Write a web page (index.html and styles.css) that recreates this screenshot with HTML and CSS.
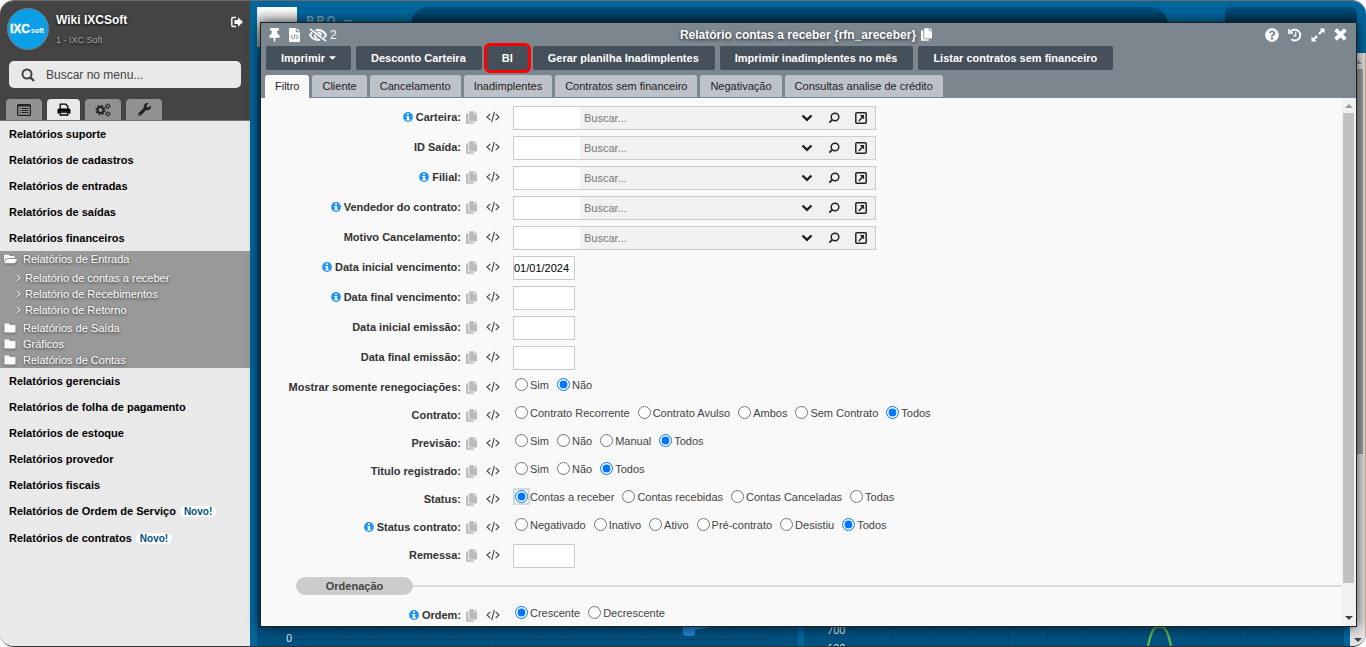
FILE: index.html
```html
<!DOCTYPE html>
<html lang="pt-BR">
<head>
<meta charset="utf-8">
<title>Relatório contas a receber</title>
<link rel="stylesheet" href="styles.css">
</head>
<body>
<svg class="sprite" aria-hidden="true">
  <symbol id="i-copy" viewBox="0 0 448 512"><path d="M320 448v40c0 13.255-10.745 24-24 24H24c-13.255 0-24-10.745-24-24V120c0-13.255 10.745-24 24-24h72v296c0 30.879 25.121 56 56 56h168zm0-344V0H152c-13.255 0-24 10.745-24 24v368c0 13.255 10.745 24 24 24h272c13.255 0 24-10.745 24-24V128H344c-13.2 0-24-10.8-24-24zm120.971-31.029L375.029 7.029A24 24 0 0 0 358.059 0H352v96h96v-6.059a24 24 0 0 0-7.029-16.97z"/></symbol>
  <symbol id="i-code" viewBox="0 0 14 12"><path d="M4.300 2.800L1 6l3.300 3.200M9.700 2.800L13 6l-3.300 3.200M8.300 .8L5.700 11.200" fill="none" stroke="currentColor" stroke-width="1.100"/></symbol>
  <symbol id="i-info" viewBox="0 0 10 10"><circle cx="5" cy="5" r="4.900"/><path d="M4 1.500h2v1.600H4zM3.300 4h2.800v3.200h.8v1.200H3.300V7.200h.8v-2h-.8z" fill="#fff"/></symbol>
  <symbol id="i-help" viewBox="0 0 512 512"><path d="M504 256c0 136.997-111.043 248-248 248S8 392.997 8 256C8 119.083 119.043 8 256 8s248 111.083 248 248zM262.655 90c-54.497 0-89.255 22.957-116.549 63.758-3.536 5.286-2.353 12.415 2.715 16.258l34.699 26.31c5.205 3.947 12.621 3.008 16.665-2.122 17.864-22.658 30.113-35.797 57.303-35.797 20.429 0 45.698 13.148 45.698 32.958 0 14.976-12.363 22.667-32.534 33.976C247.128 238.528 216 254.941 216 296v4c0 6.627 5.373 12 12 12h56c6.627 0 12-5.373 12-12v-1.333c0-28.462 83.186-29.647 83.186-106.667 0-58.002-60.165-102-116.531-102zM256 338c-25.365 0-46 20.635-46 46 0 25.364 20.635 46 46 46s46-20.636 46-46c0-25.365-20.635-46-46-46z"/></symbol>
  <symbol id="i-folder" viewBox="0 0 12 10"><path d="M1.500.5h3.300L6 2h4.500q1 0 1 1v5.500q0 1-1 1h-9q-1 0-1-1v-7q0-1 1-1z"/></symbol>
  <symbol id="i-folder-open" viewBox="0 0 576 512"><path d="M572.694 292.093L500.270 416.248A63.997 63.997 0 0 1 444.989 448H45.025c-18.523 0-30.064-20.093-20.731-36.093l72.424-124.155A64 64 0 0 1 152 256h399.964c18.523 0 30.064 20.093 20.730 36.093zM152 224h328v-48c0-26.510-21.490-48-48-48H272l-64-64H48C21.490 64 0 85.490 0 112v278.046l69.077-118.418C86.214 242.250 117.989 224 152 224z"/></symbol>
  <symbol id="i-chev" viewBox="0 0 12 8"><path d="M1.500 1.500L6 5.800l4.500-4.300" fill="none" stroke="currentColor" stroke-width="2.400"/></symbol>
  <symbol id="i-lens" viewBox="0 0 12 12"><circle cx="7" cy="5" r="3.800" fill="none" stroke="currentColor" stroke-width="1.500"/><path d="M4.300 7.700L1.300 10.700" stroke="currentColor" stroke-width="1.800"/></symbol>
  <symbol id="i-open" viewBox="0 0 12 12"><rect x=".8" y=".8" width="10.400" height="10.400" rx="1" fill="none" stroke="currentColor" stroke-width="1.500"/><path d="M4.600 3h4.500v4.500L7.700 6.100 4.300 9.400l-1-1L6.600 5z"/></symbol>
  <symbol id="i-up" viewBox="0 0 8 4"><path d="M0 4l4-4 4 4z"/></symbol>
  <symbol id="i-down" viewBox="0 0 8 4"><path d="M0 0l4 4 4-4z"/></symbol>
</svg>

<div class="app">
  <aside class="sidebar">
    <header class="side-head">
      <div class="profile">
        <svg class="logo" viewBox="0 0 42 42" role="img" aria-label="IXCsoft"><circle cx="21" cy="21" r="20.500" fill="#0a9fe6" stroke="#6d7f88"/><text x="3" y="25" class="logo-big">IXC</text><text x="24" y="25" class="logo-small">soft</text></svg>
        <div class="who"><strong>Wiki IXCSoft</strong><span>1 - IXC Soft</span></div>
        <button class="plain exit" aria-label="Sair"><svg viewBox="0 0 12 12" width="12" height="12"><path d="M5 1.500H2Q.8 1.500.8 2.700v6.600Q.8 10.500 2 10.500h3" fill="none" stroke="currentColor" stroke-width="1.400"/><path d="M3.500 4H7V1.300L12 6l-5 4.700V8H3.500z"/></svg></button>
      </div>
      <label class="search"><svg viewBox="0 0 14 14" width="14" height="14"><circle cx="6" cy="6" r="4.500" fill="none" stroke="currentColor" stroke-width="2"/><path d="M9.300 9.300l3.700 3.700" stroke="currentColor" stroke-width="2.400"/></svg><input type="text" placeholder="Buscar no menu..." aria-label="Buscar no menu"></label>
      <nav class="side-tabs">
        <button aria-label="Menu"><svg viewBox="0 0 14 12" width="14" height="12"><rect x=".6" y=".6" width="12.800" height="10.800" rx="1" fill="none" stroke="currentColor" stroke-width="1.200"/><path d="M1 1h12v1.500H1zM2.500 4h1v1h-1zM4.500 4h7v1h-7zM2.500 6h1v1h-1zM4.500 6h7v1h-7zM2.500 8h1v1h-1zM4.500 8h7v1h-7z"/></svg></button>
        <button class="on" aria-label="Relatórios"><svg viewBox="0 0 14 13" width="14" height="13"><path d="M3.200 6V1.200h5.600l2 2V6M3.200 9h7.600v3H3.200z" fill="none" stroke="currentColor" stroke-width="1.300"/><path d="M2 5.500h10q1.500 0 1.500 1.500v3.500H11.400V8.400H2.600v2.100H.5V7Q.5 5.500 2 5.500z"/></svg></button>
        <button aria-label="Configurações"><svg viewBox="0 0 16 14" width="16" height="14" fill="none" stroke="currentColor"><g class="hollow"><circle cx="5.500" cy="7" r="3" stroke-width="2"/><circle cx="5.500" cy="7" r="4.500" stroke-width="1.400" stroke-dasharray="1.770 1.765"/><circle cx="12.800" cy="3.200" r="1.500"/><circle cx="12.800" cy="3.200" r="2.400" stroke-dasharray="1 .885"/><circle cx="12.800" cy="10.800" r="1.500"/><circle cx="12.800" cy="10.800" r="2.400" stroke-dasharray="1 .885"/></g></svg></button>
        <button aria-label="Ferramentas"><svg viewBox="0 0 512 512" width="13" height="13"><path d="M507.730 109.100c-2.240-9.030-13.540-12.090-20.120-5.510l-74.360 74.360-67.880-11.310-11.310-67.880 74.360-74.360c6.620-6.620 3.430-17.900-5.660-20.160-47.380-11.740-99.550.91-136.580 37.930-39.640 39.640-50.550 97.100-34.050 147.200L18.740 402.760c-24.990 24.990-24.990 65.510 0 90.500 24.990 24.990 65.510 24.990 90.500 0l213.210-213.210c50.120 16.710 107.470 5.680 147.370-34.220 37.070-37.070 49.700-89.320 37.910-136.730zM64 472c-13.250 0-24-10.750-24-24 0-13.260 10.750-24 24-24s24 10.740 24 24c0 13.250-10.750 24-24 24z"/></svg></button>
      </nav>
    </header>
    <nav class="menu">
      <a href="#">Relatórios suporte</a>
      <a href="#">Relatórios de cadastros</a>
      <a href="#">Relatórios de entradas</a>
      <a href="#">Relatórios de saídas</a>
      <a href="#">Relatórios financeiros</a>
      <div class="tree">
        <a href="#"><svg class="ico-fopen"><use href="#i-folder-open"/></svg>Relatórios de Entrada</a>
        <div class="leaves">
          <a href="#"><svg viewBox="0 0 5 8"><path d="M.8.8L4 4 .8 7.200"/></svg>Relatório de contas a receber</a>
          <a href="#"><svg viewBox="0 0 5 8"><path d="M.8.8L4 4 .8 7.200"/></svg>Relatório de Recebimentos</a>
          <a href="#"><svg viewBox="0 0 5 8"><path d="M.8.8L4 4 .8 7.200"/></svg>Relatório de Retorno</a>
        </div>
        <a href="#"><svg class="ico-f"><use href="#i-folder"/></svg>Relatórios de Saída</a>
        <a href="#"><svg class="ico-f"><use href="#i-folder"/></svg>Gráficos</a>
        <a href="#"><svg class="ico-f"><use href="#i-folder"/></svg>Relatórios de Contas</a>
      </div>
      <a href="#">Relatórios gerenciais</a>
      <a href="#">Relatórios de folha de pagamento</a>
      <a href="#">Relatórios de estoque</a>
      <a href="#">Relatórios provedor</a>
      <a href="#">Relatórios fiscais</a>
      <a href="#" class="tagged">Relatórios de Ordem de Serviço <span class="new">Novo!</span></a>
      <a href="#" class="tagged">Relatórios de contratos <span class="new">Novo!</span></a>
    </nav>
  </aside>

  <main class="desk">
    <div class="desk-head">
      <div class="brand-box"></div><div class="brand">BRO —</div><div class="pill-wide"></div><div class="pill-end"></div>
    </div>
    <div class="desk-body">
      <div class="panels">
        <section class="panel">
          <svg width="541" height="19" viewBox="0 0 541 19">
            <path class="grid" d="M36 12.500h475M45.500 0v19M84.500 0v19M122.500 0v19M161.500 0v19M200.500 0v19M238.500 0v19M277.500 0v19M316.500 0v19M354.500 0v19M393.500 0v19M432.500 0v19M471.500 0v19M510.500 0v12"/>
            <path d="M426 0h28l-16 3v3q0 3-3 3h-6q-3 0-3-3z" fill="#1e86d8"/>
            <text x="29" y="15" class="tick">0</text>
          </svg>
        </section>
        <section class="panel">
          <svg width="540" height="19" viewBox="0 0 540 19">
            <path class="grid" d="M50.500 0v19M88.500 0v19M127.500 0v19M166.500 0v19M204.500 0v19M243.500 0v19M282.500 0v19M320.500 0v19M359.500 0v19M397.500 0v19M436.500 0v19M474.500 0v19M513.500 0v19"/>
            <path d="M344 19q4-19 9-19h5q5 0 9 19" fill="none" stroke="#5cae50" stroke-width="2.500"/>
            <text x="23" y="7" class="tick">700</text><text x="23" y="25" class="tick">600</text>
          </svg>
        </section>
      </div>
      <div class="page-scroll"><svg class="arrow dim"><use href="#i-up"/></svg><i></i><svg class="arrow"><use href="#i-down"/></svg></div>
    </div>

    <section class="dialog" role="dialog" aria-label="Relatório contas a receber">
      <header class="dlg-head">
        <div class="titlebar">
          <div class="tools">
            <button class="plain" aria-label="Fixar"><svg viewBox="0 0 384 512" width="11" height="14"><path d="M298.028 214.267L285.793 96H328c13.255 0 24-10.745 24-24V24c0-13.255-10.745-24-24-24H56C42.745 0 32 10.745 32 24v48c0 13.255 10.745 24 24 24h42.207L85.972 214.267C37.465 236.820 0 277.261 0 328c0 13.255 10.745 24 24 24h136v104.007c0 1.242.289 2.467.845 3.578l24 48c2.941 5.882 11.364 5.893 14.311 0l24-48a8.008 8.008 0 0 0 .845-3.578V352h136c13.255 0 24-10.745 24-24-.001-51.183-37.983-91.420-85.973-113.733z"/></svg></button>
            <button class="plain" aria-label="Código"><svg viewBox="0 0 11 14" width="11" height="14"><path d="M1 0h5.800v3.500q0 .7.700.7H11V13q0 1-1 1H1q-1 0-1-1V1q0-1 1-1zM7.700 0L11 3.300H7.700z"/><path d="M3.700 7L1.900 8.900l1.800 1.900M7.300 7l1.800 1.900-1.800 1.900M6.200 6.300l-1.400 5.200" fill="none" stroke="#7b868f"/></svg></button>
            <button class="plain" aria-label="Campos ocultos"><svg class="hollow" viewBox="0 0 18 14" width="18" height="14" stroke="currentColor"><path d="M3.200 4.500Q1.800 5.700 1 7q3 5 8 5 1 0 2-.3M6.300 2.400Q7.600 2 9 2q5 0 8 5-.8 1.500-2.200 2.700" stroke-width="1.800"/><path d="M5.700 6.600Q5.600 9.600 8.500 10.300M8.500 4.500q3.200-.3 3.600 2.900" stroke-width="1.900"/><path d="M1 .8l16 12.400" stroke-width="1.700"/></svg></button>
            <span>2</span>
          </div>
          <h1>Relatório contas a receber {rfn_areceber}<svg><use href="#i-copy"/></svg></h1>
          <div class="win">
            <button class="plain" aria-label="Ajuda"><svg width="14" height="14"><use href="#i-help"/></svg></button>
            <button class="plain" aria-label="Histórico"><svg class="hollow" viewBox="0 0 14 14" width="14" height="14" stroke="currentColor"><path d="M2.500 4A5.400 5.400 0 1 1 3.300 11.200" stroke-width="1.900"/><path d="M7.600 4.300v3.500H5.200" stroke-width="1.300"/><path d="M1 1v4h4" stroke-width="1.700"/></svg></button>
            <button class="plain" aria-label="Maximizar"><svg viewBox="0 0 14 14" width="14" height="14"><path d="M8.500.5h5v5l-1.700-1.700-3 3-1.600-1.600 3-3zM.5 8.500l1.700 1.700 3-3 1.600 1.600-3 3 1.700 1.700h-5z"/></svg></button>
            <button class="plain" aria-label="Fechar"><svg viewBox="0 0 12 12" width="13" height="13"><path d="M1.500 1.500l9 9M10.500 1.500l-9 9" stroke="currentColor" stroke-width="3.600"/></svg></button>
          </div>
        </div>
        <div class="actions">
          <button class="drop">Imprimir <svg><use href="#i-down"/></svg></button>
          <button>Desconto Carteira</button>
          <button class="marked">BI</button>
          <button>Gerar planilha Inadimplentes</button>
          <button>Imprimir inadimplentes no mês</button>
          <button>Listar contratos sem financeiro</button>
        </div>
        <nav class="tabs">
          <button class="on">Filtro</button><button>Cliente</button><button>Cancelamento</button><button>Inadimplentes</button><button>Contratos sem financeiro</button><button>Negativação</button><button>Consultas analise de crédito</button>
        </nav>
      </header>
      <div class="dlg-body">
        <form class="form" id="form"></form>
        <div class="scroll"><svg class="arrow dim"><use href="#i-up"/></svg><i></i><svg class="arrow"><use href="#i-down"/></svg></div>
      </div>
    </section>
  </main>
</div>
<script src="form.js"></script>
</body>
</html>
```
FILE: styles.css
```css
* { box-sizing: border-box; }
body { margin: 0; background: #fff; font: 11px/16px "Liberation Sans", Arial, sans-serif; color: #444; }
button, input { font: inherit; color: inherit; }
button { border: 0; padding: 0; cursor: pointer; }
a { color: inherit; text-decoration: none; }
svg { fill: currentColor; flex: none; display: block; }
.hollow { fill: none; }
.sprite { position: absolute; width: 0; height: 0; }
.plain { background: none; color: #fff; display: flex; }

.app { display: flex; height: 100vh; border-top: 1px solid #6b6b6b; border-bottom: 1px solid #333; border-radius: 14px; overflow: hidden; }

.sidebar { flex: none; width: 250px; background: #e9e9e9; display: flex; flex-direction: column; }
.side-head { background: #444; border-bottom: 1px solid #777; height: 120px; display: flex; flex-direction: column; }
.profile { display: flex; gap: 7px; padding: 7px 7px 0; height: 60px; }
.logo { width: 42px; height: 42px; }
.logo-big { font: bold 12px "Liberation Sans", sans-serif; fill: #fff; stroke: #fff; stroke-width: .4px; }
.logo-small { font: bold 7px "Liberation Sans", sans-serif; fill: #fff; }
.who { flex: 1; display: flex; flex-direction: column; gap: 4px; padding-top: 4px; text-shadow: 0 1px 3px #000; }
.who strong { font-size: 12px; color: #fff; }
.who span { font-size: 9px; color: #aaa; }
.exit { align-self: flex-start; padding-top: 8px; }
.search { display: flex; align-items: center; gap: 11px; margin: 0 9px; height: 27px; padding: 0 12px; background: #e9e9e9; border-radius: 5px; color: #444; }
.search input { flex: 1; min-width: 0; border: 0; background: none; outline: 0; padding: 0; font-size: 12px; }
.search input::placeholder { color: #444; }
.side-tabs { display: flex; gap: 5px; padding: 0 6px; margin-top: auto; }
.side-tabs button { width: 36px; height: 21px; display: flex; align-items: center; justify-content: center; background: #919191; border-radius: 4px 4px 0 0; color: #222; }
.side-tabs .on { background: #e9e9e9; color: #000; width: 33px; margin-bottom: -1px; }
.menu { color: #000; font-weight: bold; }
.menu > a { display: flex; align-items: center; height: 26px; padding: 0 9px; }
.menu > .tagged { gap: 4px; margin-bottom: 1px; }
.new { background: #fff; color: #00517f; font-size: 10px; line-height: 11px; border-radius: 6px; padding: 0 4px; }
.tree { background: #999; color: #fff; font-weight: normal; text-shadow: 0 1px 3px #333; }
.tree a { display: flex; align-items: center; height: 16px; padding-left: 4px; }
.tree svg { filter: drop-shadow(0 1px 1px #666); }
.ico-f { width: 12px; height: 10px; margin-right: 7px; }
.ico-fopen { width: 13px; height: 12px; margin-right: 6px; }
.leaves { padding: 3px 0 2px 12px; }
.tree .leaves svg { width: 5px; height: 8px; margin-right: 4px; fill: none; stroke: #fff; }

.desk { position: relative; flex: 1; min-width: 0; background: #00669c; display: flex; flex-direction: column; }
.desk-head { display: flex; height: 52px; padding: 6px 9px 0 7px; }
.brand-box { width: 40px; height: 40px; background: linear-gradient(#fff, #999); }
.brand { width: 114px; padding: 7px 9px; font: 500 13px/14px Roboto, sans-serif; letter-spacing: 2px; color: #7ba4bb; }
.pill-wide { flex: 1; border-radius: 18px 18px 0 0; background: linear-gradient(#00517f, #002f4a 20px); margin-right: 57px; }
.pill-end { width: 132px; border-radius: 6px; background: linear-gradient(#00517f, #002f4a 20px); }
.desk-body { flex: 1; min-height: 0; display: flex; }
.panels { flex: 1; min-width: 0; display: flex; gap: 6px; padding: 0 6px 0 7px; }
.panel { flex: 1; min-width: 0; overflow: hidden; background: #00517f; border-radius: 6px 6px 0 0; display: flex; flex-direction: column; justify-content: flex-end; }
.grid { fill: none; stroke: #00466e; }
.tick { font: 11px Roboto, sans-serif; fill: #d3e2eb; }
.page-scroll { width: 16px; background: #e2e2e2; display: flex; flex-direction: column; align-items: center; gap: 5px; padding: 7px 0 4px; border-right: 1px solid #d9a58a; }
.page-scroll i { flex: 0 0 385px; width: 11px; background: #a0a0a0; }
.arrow { width: 8px; height: 4px; color: #444; margin-top: auto; }
.arrow.dim { color: #999; margin-top: 0; }

.dialog { position: absolute; top: 21px; right: 9px; bottom: 19px; left: 10px; border: 1px solid #1d2226; background: #f9f9f9; display: flex; flex-direction: column; box-shadow: 0 0 12px rgba(0,0,0,.75); }
.dlg-head { flex: none; background: #7b868f; }
.titlebar { display: grid; grid-template-columns: 1fr auto 1fr; align-items: center; height: 23px; padding: 0 9px 0 8px; color: #fff; }
.tools, .win { display: flex; align-items: center; gap: 9px; }
.tools span { font-size: 12px; margin-left: -6px; }
.win { justify-content: flex-end; }
h1 { margin: 0 4px 0 0; font-size: 12px; line-height: 16px; display: flex; align-items: center; gap: 5px; text-shadow: 0 1px 3px #222; }
h1 svg { width: 11px; height: 13px; }
.actions { display: flex; gap: 5px; padding: 0 5px; }
.actions button { height: 24px; padding: 0 16px 0 15px; background: #46505a; color: #fff; font-weight: bold; border-radius: 2px; white-space: nowrap; }
.actions .drop { display: flex; align-items: center; gap: 4px; padding-right: 15px; }
.drop svg { width: 7px; height: 4px; }
.actions .marked { position: relative; padding-right: 15px; }
.marked::after { content: ""; position: absolute; inset: -3px; border: 3px solid red; border-radius: 6px; }
.tabs { display: flex; gap: 3px; padding: 5px 4px 0; }
.tabs button { height: 22px; padding: 0 10px; margin-bottom: 1px; background: #bdc1c9; color: #222; border-radius: 3px 3px 0 0; white-space: nowrap; }
.tabs .on { background: #f9f9f9; height: 23px; margin-bottom: 0; padding-bottom: 1px; }

.dlg-body { flex: 1; min-height: 0; display: flex; }
.form { flex: 1; min-width: 0; overflow: hidden; padding-top: 8px; }
.scroll { width: 15px; background: #f1f1f1; display: flex; flex-direction: column; align-items: center; padding: 6px 0; }
.scroll i { flex: 0 0 91%; width: 11px; margin-top: 5px; background: #c1c1c1; }
.row { display: flex; height: 30px; }
.row.short { height: 28px; }
.cap { flex: none; width: 252px; height: 22px; display: flex; align-items: center; color: #333; }
.cap label, .cap .lbl { width: 200px; font-weight: bold; display: flex; align-items: center; justify-content: flex-end; gap: 3px; white-space: nowrap; }
.cap .info { width: 10px; height: 10px; color: #2196f3; }
.cap .copy { width: 11px; height: 13px; margin-left: 5px; color: #bbb; }
.cap .code { width: 14px; height: 12px; margin-left: 9px; color: #444; }
.box { width: 62px; height: 24px; padding: 0; border: 1px solid #ccc; background: #fff; color: #000; }
.combo { display: flex; width: 363px; height: 24px; border: 1px solid #ccc; background: #f1f1f1; color: #222; }
.combo input { border: 0; padding: 0; background: none; min-width: 0; }
.combo .id { width: 66px; background: #fff; }
.combo .find { flex: 1; padding-left: 4px; }
.combo .find::placeholder { color: #777; }
.combo button { width: 27px; background: none; display: flex; align-items: center; justify-content: center; }
.combo button:last-child { margin-right: 1px; }
.combo svg { width: 12px; height: 12px; }
.combo .chev { height: 8px; }
.opts { display: flex; gap: 8px; padding-left: 2px; height: 17px; }
.opts label { display: flex; align-items: center; gap: 2px; white-space: nowrap; }
.opts input { width: 13px; height: 13px; margin: 0; }
.opts .focused { box-shadow: 0 0 0 2px #cfdbe3; }
.sep { display: flex; align-items: center; margin: 5px 0 9px 35px; }
.sep span { width: 117px; line-height: 18px; border-radius: 9px; background: #ccc; text-align: center; font-weight: bold; }
.sep::after { content: ""; flex: 1; height: 2px; background: #dadada; }
```
FILE: form.js
```js
const fields = [
  ['combo', 'Carteira', true],
  ['combo', 'ID Saída', false],
  ['combo', 'Filial', true],
  ['combo', 'Vendedor do contrato', true],
  ['combo', 'Motivo Cancelamento', false],
  ['text', 'Data inicial vencimento', true, '01/01/2024'],
  ['text', 'Data final vencimento', true, ''],
  ['text', 'Data inicial emissão', false, ''],
  ['text', 'Data final emissão', false, ''],
  ['radio', 'Mostrar somente renegociações', false, ['Sim', 'Não'], 1],
  ['radio', 'Contrato', false, ['Contrato Recorrente', 'Contrato Avulso', 'Ambos', 'Sem Contrato', 'Todos'], 4],
  ['radio', 'Previsão', false, ['Sim', 'Não', 'Manual', 'Todos'], 3],
  ['radio', 'Titulo registrado', false, ['Sim', 'Não', 'Todos'], 2],
  ['radio', 'Status', false, ['Contas a receber', 'Contas recebidas', 'Contas Canceladas', 'Todas'], 0],
  ['radio', 'Status contrato', true, ['Negativado', 'Inativo', 'Ativo', 'Pré-contrato', 'Desistiu', 'Todos'], 5],
  ['text', 'Remessa', false, ''],
  ['sep', 'Ordenação'],
  ['radio', 'Ordem', true, ['Crescente', 'Decrescente'], 0]
];
const icon = (id, cls) => `<svg class="${cls}"><use href="#i-${id}"/></svg>`;

document.getElementById('form').innerHTML = fields.map(([type, name, info, data, pick], n) => {
  if (type === 'sep') return `<div class="sep"><span>${name}</span></div>`;
  const id = 'f' + n;
  const text = (info ? icon('info', 'info') : '') + name + ':';
  const label = type === 'radio' ? `<span class="lbl" id="${id}">${text}</span>` : `<label for="${id}">${text}</label>`;
  let control;
  if (type === 'combo') {
    control = `<div class="combo"><input type="text" class="id" id="${id}"><input type="text" class="find" placeholder="Buscar..." aria-label="Buscar ${name}">` +
      `<button type="button" aria-label="Listar">${icon('chev', 'chev')}</button><button type="button" aria-label="Pesquisar">${icon('lens', '')}</button><button type="button" aria-label="Abrir">${icon('open', '')}</button></div>`;
  } else if (type === 'text') {
    control = `<input type="text" class="box" id="${id}" value="${data}">`;
  } else {
    control = `<div class="opts" role="radiogroup" aria-labelledby="${id}">` + data.map((o, i) =>
      `<label><input type="radio" name="${id}"${i === pick ? ' checked' : ''}${name === 'Status' && i === 0 ? ' class="focused"' : ''}>${o}</label>`).join('') + '</div>';
  }
  const short = type === 'radio' || name === 'Remessa' ? ' short' : '';
  return `<div class="row${short}"><div class="cap">${label}${icon('copy', 'copy')}${icon('code', 'code')}</div>${control}</div>`;
}).join('');
```
